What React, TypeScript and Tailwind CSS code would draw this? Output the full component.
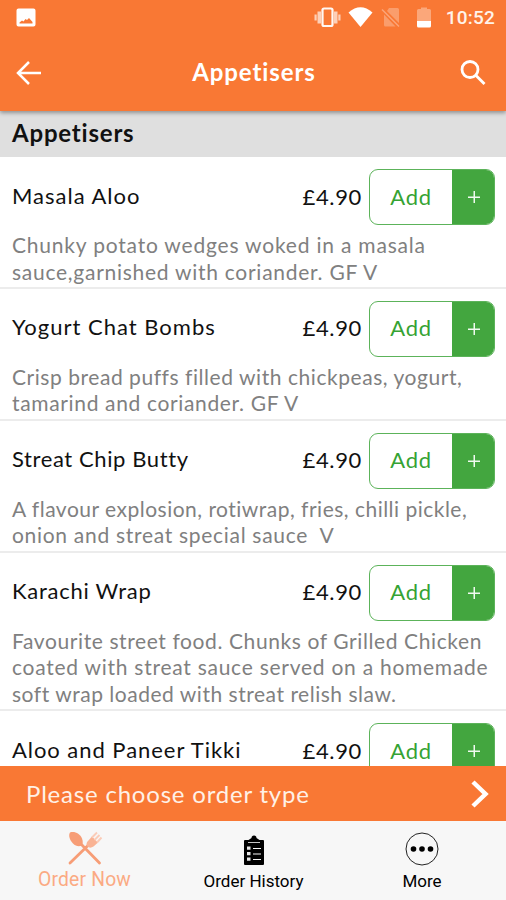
import clsx from 'clsx';

interface Line {
  text: string;
  tracking: string;
}

interface MenuItem {
  name: string;
  nameTracking: string;
  price: string;
  lines: Line[];
}

const menuItems: MenuItem[] = [
  {
    name: 'Masala Aloo',
    nameTracking: 'tracking-[1px]',
    price: '£4.90',
    lines: [
      { text: 'Chunky potato wedges woked in a masala', tracking: 'tracking-[0.8px]' },
      { text: 'sauce,garnished with coriander. GF V', tracking: 'tracking-[0.73px]' },
    ],
  },
  {
    name: 'Yogurt Chat Bombs',
    nameTracking: 'tracking-[1px]',
    price: '£4.90',
    lines: [
      { text: 'Crisp bread puffs filled with chickpeas, yogurt,', tracking: 'tracking-[0.55px]' },
      { text: 'tamarind and coriander. GF V', tracking: 'tracking-[0.65px]' },
    ],
  },
  {
    name: 'Streat Chip Butty',
    nameTracking: 'tracking-[0.6px]',
    price: '£4.90',
    lines: [
      { text: 'A flavour explosion, rotiwrap, fries, chilli pickle,', tracking: 'tracking-[0.49px]' },
      { text: 'onion and streat special sauce  V', tracking: 'tracking-[0.7px]' },
    ],
  },
  {
    name: 'Karachi Wrap',
    nameTracking: 'tracking-[0.75px]',
    price: '£4.90',
    lines: [
      { text: 'Favourite street food. Chunks of Grilled Chicken', tracking: 'tracking-[0.6px]' },
      { text: 'coated with streat sauce served on a homemade', tracking: 'tracking-[0.74px]' },
      { text: 'soft wrap loaded with streat relish slaw.', tracking: 'tracking-[0.52px]' },
    ],
  },
  {
    name: 'Aloo and Paneer Tikki',
    nameTracking: 'tracking-[0.95px]',
    price: '£4.90',
    lines: [],
  },
];

function StatusBar() {
  return (
    <div className="h-9 shrink-0 flex items-center pl-4 pr-[11px]">
      <svg className="w-5 h-5" viewBox="0 0 20 20">
        <path fill="#fff" fillRule="evenodd" d="M2.5.5h15a2 2 0 0 1 2 2v14a2 2 0 0 1-2 2h-15a2 2 0 0 1-2-2v-14a2 2 0 0 1 2-2zM3.500 15.500h13v-1.500l-3.500-4-2 2-1.500-1-2 2.500-1.500-1-2.500 2z" />
      </svg>
      <svg className="w-[27px] h-6 ml-auto" viewBox="0 0 27 24">
        <path fill="#fff" fillOpacity=".65" d="M3.500 5.500H7v12H3.500zM.5 8.500h2.200v6H.5zM20 5.500h3.500v12H20zM24.300 8.500h2.200v6h-2.200z" />
        <rect x="8.500" y="2.500" width="10" height="17.500" rx="1.500" fill="none" stroke="#fff" strokeOpacity=".95" strokeWidth="2.200" />
      </svg>
      <svg className="w-[25px] h-6 ml-[7px]" viewBox="0 0 25 24">
        <path fill="#fff" d="M.5 6.500Q12.500-4 24.500 6.500L12.500 21z" />
      </svg>
      <svg className="w-5 h-6 ml-2" viewBox="0 0 20 24">
        <path fill="#fff" fillOpacity=".28" d="M8 2h8.500A1.500 1.500 0 0 1 18 3.500V17L6 5zM3 8.500L14.500 20.500H4.500A1.500 1.500 0 0 1 3 19z" />
        <path stroke="#fff" strokeOpacity=".35" strokeWidth="1.500" d="M1 3.500l17 17" />
      </svg>
      <svg className="w-[14px] h-6 ml-4" viewBox="0 0 14 24">
        <path fill="#fff" fillOpacity=".35" d="M0 4.500Q0 3 1.500 3H4V1.500h6V3h2.500Q14 3 14 4.500V15H0z" />
        <path fill="#fff" d="M0 15h14v5q0 1.500-1.500 1.500h-11Q0 21.500 0 20z" />
      </svg>
      <span className="ml-[15px] text-[19px] leading-6 font-medium tracking-[0.2px] text-[#fff3ea] font-['Roboto',sans-serif]">10:52</span>
    </div>
  );
}

function AddButton() {
  return (
    <button type="button" className="ml-[7px] w-[126px] h-14 shrink-0 flex rounded-[9px] border border-[#5cb35a] bg-white overflow-hidden">
      <span className="flex-1 h-full flex items-center justify-center pb-0.5 text-[22px] text-[#35a333] tracking-[0.7px]">Add</span>
      <span className="w-[42px] h-full flex items-center justify-center pl-0.5 bg-[#43a63f]">
        <svg className="w-3 h-3" viewBox="0 0 12 12">
          <path stroke="#f0faf0" strokeWidth="1.500" d="M6.250 0v12M0 6.250h12" />
        </svg>
      </span>
    </button>
  );
}

function MenuRow({ item }: { item: MenuItem }) {
  return (
    <div className="shrink-0 border-b-2 border-[#ececec] pt-3">
      <div className="flex items-center pl-3 pr-[11px]">
        <h3 className={clsx('flex-1 text-[22px] leading-7 pb-[3px] text-[#111] whitespace-nowrap', item.nameTracking)}>{item.name}</h3>
        <span className="pb-px text-[22px] leading-7 text-[#111] tracking-[0.65px]">{item.price}</span>
        <AddButton />
      </div>
      <div className="pl-3 pt-[7px] pb-[1.9px] text-[21px] leading-[26.500px] text-[#808080]">
        {item.lines.map((line, i) => (
          <p key={i} className="whitespace-pre">
            <span className={line.tracking}>{line.text}</span>
          </p>
        ))}
      </div>
    </div>
  );
}

function BottomNav() {
  return (
    <nav className="h-[79px] shrink-0 flex bg-[#f7f7f7] font-['Roboto',sans-serif] text-black">
      <div className="w-[169px] flex flex-col items-center pt-[10px] text-[#fbaa83]">
        <svg className="w-9 h-9" viewBox="0 0 36 36">
          <path stroke="#f79d76" strokeWidth="2.800" strokeLinecap="round" d="M13 12l19.500 20M3 32l18.500-18" />
          <path fill="#f79d76" d="M3 1.500c5-1.500 10 1.500 12 6 1.200 3 1 5.500-.5 7-2.500 1.500-6 .5-8.500-2C3 9.500 1 4.500 3 1.500z" />
          <path fill="#f9b394" d="M20.500 10.500l4.500-5 6 6-4.500 4c-2 1.500-4.500 1.500-6 0s-1.200-3.500 0-5z" />
          <path stroke="#fbccb8" strokeWidth="1.900" d="M25 6.500l5-5M27.500 9l5-5M30 11.500l4.500-5" />
        </svg>
        <span className="mt-px text-[19.300px] leading-6 tracking-[0.2px]">Order Now</span>
      </div>
      <div className="w-[169px] flex flex-col items-center pt-[13px]">
        <svg className="w-6 h-[33px]" viewBox="0 0 24 33">
          <path d="M3 6h3.500L9.500 4a2.500 2.500 0 0 1 5 0l3 2H21a1 1 0 0 1 1 1v23a1 1 0 0 1-1 1H3a1 1 0 0 1-1-1V7a1 1 0 0 1 1-1z" />
          <path stroke="#f7f7f7" strokeWidth=".8" fill="none" d="M6 8.500h12" />
          <path fill="#e8e8e8" d="M5 12.500h3.500v3.200H5zM5 18h3.500v3.200H5zM5 23.500h3.500v3.200H5z" />
          <path stroke="#f7f7f7" strokeWidth="1.200" fill="none" d="M11 14.500h8M11 20h8M11 25.500h8" />
        </svg>
        <span className="text-[17px] leading-7">Order History</span>
      </div>
      <div className="flex-1 flex flex-col items-center pt-[11px]">
        <svg className="w-[34px] h-[34px]" viewBox="0 0 34 34">
          <circle cx="17" cy="17" r="16" fill="none" stroke="#222" strokeWidth="1" />
          <circle cx="8.500" cy="17" r="2.800" />
          <circle cx="17" cy="17" r="2.800" />
          <circle cx="25.500" cy="17" r="2.800" />
        </svg>
        <span className="mt-px text-[17px] leading-7">More</span>
      </div>
    </nav>
  );
}

export default function App() {
  return (
    <div className="w-[506px] h-[900px] flex flex-col overflow-hidden bg-white font-['Lato','Open_Sans',sans-serif]">
      <header className="relative z-10 h-[111px] shrink-0 flex flex-col bg-[#f97834] text-white shadow-[0_2px_4px_rgba(0,0,0,0.35)]">
        <StatusBar />
        <div className="h-[73px] flex items-center justify-between pl-4 pr-5">
          <svg className="w-[26px] h-6" viewBox="0 0 26 24" fill="none" stroke="#fff" strokeWidth="2.500">
            <path d="M25 12H2M13 1L2 12l11 11" />
          </svg>
          <h1 className="pb-0.5 pl-1.5 text-[24px] leading-7 font-bold tracking-[0.9px]">Appetisers</h1>
          <svg className="w-[26px] h-[26px]" viewBox="0 0 26 26" fill="none" stroke="#fff" strokeWidth="2.800">
            <circle cx="10" cy="9.500" r="8" />
            <path d="M15.500 15l9 9" />
          </svg>
        </div>
      </header>
      <h2 className="h-[46px] shrink-0 pl-3 bg-[#dfdfdf] text-[24px] leading-[44px] font-bold text-[#111] tracking-[0.8px]">Appetisers</h2>
      <main className="flex-1 min-h-0 flex flex-col overflow-hidden">
        {menuItems.map((item) => (
          <MenuRow key={item.name} item={item} />
        ))}
      </main>
      <div className="h-[55px] shrink-0 flex items-center justify-between pl-[26px] pr-[17px] bg-[#f97834] text-[#fff1e6]">
        <span className="text-[24px] leading-8 tracking-[0.8px]">Please choose order type</span>
        <svg className="w-[18px] h-7" viewBox="0 0 18 28" fill="none" stroke="#fff" strokeWidth="4.500">
          <path d="M2 2l12.500 12L2 26" />
        </svg>
      </div>
      <BottomNav />
    </div>
  );
}
